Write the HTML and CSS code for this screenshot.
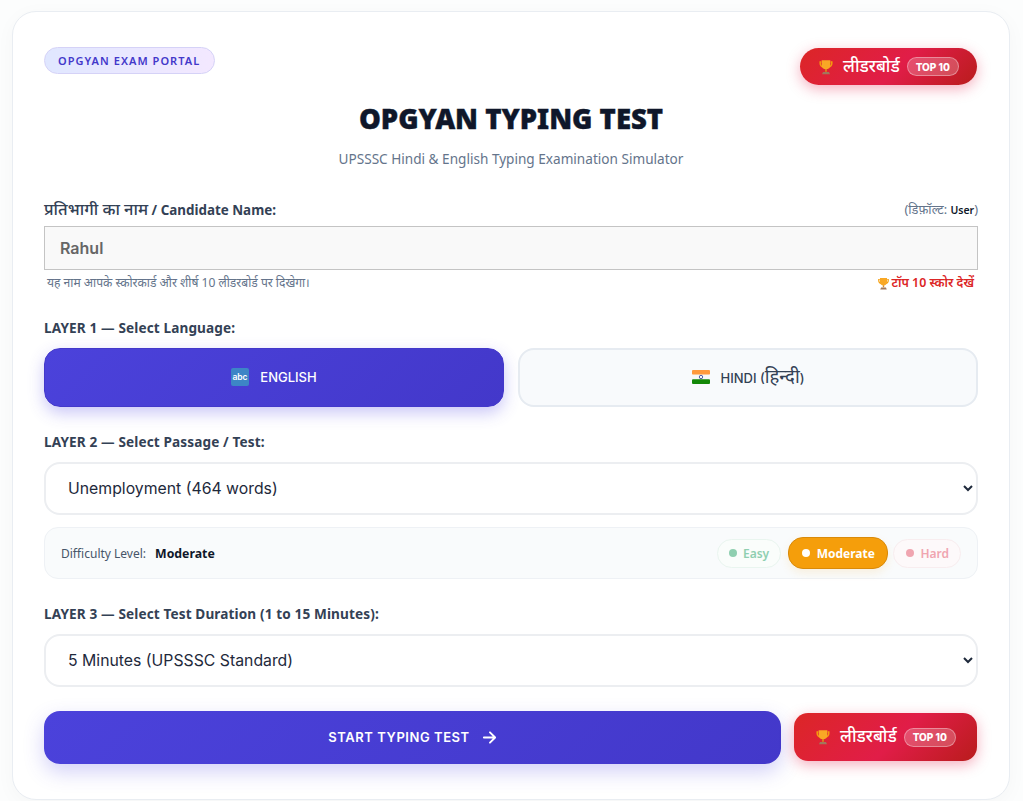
FILE: index.html
```html
<!DOCTYPE html>
<html lang="hi">
<head>
<meta charset="utf-8">
<title>OPGYAN Typing Test</title>
<link rel="stylesheet" href="styles.css">
</head>
<body>
<svg class="defs" width="0" height="0" aria-hidden="true">
  <symbol id="trophy" viewBox="0 0 24 24">
    <path d="M5 3.500H2.200v3.200c0 3.600 2.300 5.700 5.400 6l.5-1.900c-2.200-.2-3.700-1.600-3.700-4V5.500H5z M19 3.500h2.800v3.200c0 3.600-2.300 5.700-5.400 6l-.5-1.900c2.200-.2 3.700-1.600 3.700-4V5.500H19z" fill="#f59e0b"/>
    <path d="M5.500 2h13v7.500c0 3.600-2.600 6-6.500 6s-6.500-2.400-6.500-6z" fill="#f9a825"/>
    <path d="M10.700 15h2.600v4h-2.600z" fill="#e08a1a"/>
    <path d="M7.500 19.500h9L18 23H6z" fill="#a1785c"/>
  </symbol>
</svg>
<main class="card">
  <header class="top">
    <span class="badge">OPGYAN EXAM PORTAL</span>
    <button class="lead lead-pill" type="button">
      <svg class="trophy"><use href="#trophy"/></svg>
      <span class="lead-text">लीडरबोर्ड</span>
      <span class="top10">TOP 10</span>
    </button>
  </header>
  <h1 class="title">OPGYAN TYPING TEST</h1>
  <p class="sub">UPSSSC Hindi &amp; English Typing Examination Simulator</p>

  <div class="name-head">
    <label class="label name-label" for="name"><span class="hi">प्रतिभागी का नाम</span> / Candidate Name:</label>
    <span class="default">(डिफ़ॉल्ट: <b>User</b>)</span>
  </div>
  <input class="name" id="name" value="Rahul">
  <div class="hint-row">
    <span class="hint">यह नाम आपके स्कोरकार्ड और शीर्ष 10 लीडरबोर्ड पर दिखेगा।</span>
    <span class="hint-link"><svg class="trophy-s"><use href="#trophy"/></svg> टॉप 10 स्कोर देखें</span>
  </div>

  <div class="label layer-1">LAYER 1 — Select Language:</div>
  <div class="langs">
    <button class="lang active" type="button">
      <svg class="lang-icon" viewBox="0 0 18 18"><rect width="18" height="18" rx="2" fill="#3d85c6"/><text x="9" y="12" text-anchor="middle" class="abc">abc</text></svg>
      ENGLISH
    </button>
    <button class="lang" type="button">
      <svg class="lang-icon" viewBox="0 0 18 14"><rect width="18" height="4.700" rx="1" fill="#ff9a3c"/><rect y="4.700" width="18" height="4.600" fill="#f8f8f8"/><rect y="9.300" width="18" height="4.700" rx="1" fill="#138808"/><circle cx="9" cy="7" r="1.700" fill="none" stroke="#2a3a8c" stroke-width=".8"/></svg>
      <span class="lang-label">HINDI (<span class="lang-hi">हिन्दी</span>)</span>
    </button>
  </div>

  <label class="label layer-2" for="passage">LAYER 2 — Select Passage / Test:</label>
  <select class="select" id="passage"><option>Unemployment (464 words)</option></select>

  <div class="difficulty">
    <div class="diff-left">Difficulty Level:<b>Moderate</b></div>
    <div class="pills">
      <span class="pill easy"><i></i>Easy</span>
      <span class="pill mod"><i></i>Moderate</span>
      <span class="pill hard"><i></i>Hard</span>
    </div>
  </div>

  <label class="label layer-3" for="dur">LAYER 3 — Select Test Duration (1 to 15 Minutes):</label>
  <select class="select" id="dur"><option>5 Minutes (UPSSSC Standard)</option></select>

  <div class="actions">
    <button class="start" type="button">START TYPING TEST
      <svg class="arrow" viewBox="0 0 16 16"><path d="M2 8h11.500M8.500 2.500 14 8l-5.500 5.500" fill="none" stroke="#fff" stroke-width="2" stroke-linecap="round" stroke-linejoin="round"/></svg>
    </button>
    <button class="lead lead-box" type="button">
      <svg class="trophy"><use href="#trophy"/></svg>
      <span class="lead-text">लीडरबोर्ड</span>
      <span class="top10">TOP 10</span>
    </button>
  </div>
</main>
</body>
</html>
```
FILE: styles.css
```css
* { box-sizing: border-box; }
html, body { margin: 0; height: 801px; overflow: hidden; }
body {
  background: #fcfdfd;
  padding: 11px 13px 0 12px;
  font-family: "Noto Sans", sans-serif;
  color: #1e293b;
}
.defs { position: absolute; }
button { font-family: inherit; cursor: pointer; }
.card {
  height: 789px;
  background: #fff;
  border: 1px solid #e9edf2;
  border-radius: 24px;
  padding: 35px 31px 0 31px;
  box-shadow: 0 4px 20px rgba(15, 23, 42, .03);
}
.top { display: flex; justify-content: space-between; align-items: flex-start; height: 48px; }
.badge {
  height: 27px;
  padding: 0 14px 0 13px;
  display: flex;
  align-items: center;
  border-radius: 14px;
  border: 1px solid #d5d2f7;
  background: linear-gradient(90deg, #e0e7ff, #f3e8ff);
  color: #4338ca;
  font-size: 11px;
  font-weight: 600;
  letter-spacing: 1.050px;
}
.lead {
  display: flex;
  align-items: center;
  justify-content: center;
  border: 0;
  padding: 0;
  color: #fff;
  background: linear-gradient(135deg, #dc2626, #e11d48 55%, #b91c1c);
  font-family: "Noto Sans", sans-serif;
  font-weight: 500;
}
.lead-pill {
  margin: 1px 1px 0 0;
  width: 177px;
  height: 37px;
  border-radius: 19px;
  box-shadow: 0 4px 14px rgba(225, 29, 72, .35);
}
.lead-box {
  width: 183px;
  height: 48px;
  margin: 2px 1px 0 0;
  border-radius: 14px;
  box-shadow: 0 4px 14px rgba(225, 29, 72, .35);
}
.trophy { width: 16px; height: 16px; margin-right: 9px; }
.lead-text { font-size: 17px; line-height: 20px; margin-right: 7px; margin-top: -2px; }
.top10 {
  font-family: "Inter", sans-serif;
  font-size: 10px;
  font-weight: 800;
  height: 19px;
  padding: 0 8px;
  display: flex;
  align-items: center;
  border-radius: 10px;
  background: rgba(255, 255, 255, .22);
  border: 1px solid rgba(255, 255, 255, .35);
}
.title {
  margin: 5px 0 0;
  text-align: center;
  font-size: 27.500px;
  line-height: 38px;
  font-weight: 900;
  color: #0f172a;
  -webkit-text-stroke: .4px #0f172a;
}
.sub {
  margin: 12px 0 0;
  text-align: center;
  font-size: 13.600px;
  line-height: 18px;
  color: #64748b;
}
.label { display: block; font-size: 13.600px; font-weight: 700; line-height: 18px; color: #334155; letter-spacing: .12px; }
.name-label { font-size: 13.400px; letter-spacing: 0; }
.hi { font-size: 16.500px; font-weight: 500; }
.name-head { display: flex; justify-content: space-between; align-items: center; margin-top: 32px; height: 18px; }
.default { font-size: 12.800px; color: #64748b; }
.default b { color: #0f172a; font-size: 10.500px; font-weight: 600; }
.name {
  display: block;
  width: 100%;
  height: 44px;
  margin-top: 8px;
  padding: 0 15px;
  border: 1px solid #c4c4c4;
  background: #f9f9f9;
  font-family: "Inter", sans-serif;
  font-size: 16px;
  font-weight: 600;
  color: #666;
  outline: 0;
}
.hint-row { display: flex; justify-content: space-between; padding: 0 4px 0 3px; margin-top: 5px; line-height: 16px; }
.hint { font-size: 12.100px; color: #64748b; }
.hint-link { font-size: 12.400px; font-weight: 600; color: #dc2626; display: flex; align-items: center; gap: 2px; }
.trophy-s { width: 13px; height: 13px; }
.layer-1 { margin-top: 28px; }
.langs { display: grid; grid-template-columns: 1fr 1fr; gap: 14px; margin-top: 11px; }
.lang {
  height: 59px;
  display: flex;
  align-items: center;
  justify-content: center;
  gap: 11px;
  padding: 0 0 2px;
  border-radius: 16px;
  border: 2px solid #e6ebf1;
  background: #f8fafc;
  color: #334155;
  font-family: "Inter", sans-serif;
  font-size: 13px;
  font-weight: 500;
}
.lang.active {
  border-color: #4338ca;
  border-width: 1px;
  background: linear-gradient(135deg, #4b42db, #4338ca);
  color: #fff;
  box-shadow: 0 6px 16px rgba(79, 70, 229, .3);
}
.lang-label { margin-bottom: 3px; }
.lang-hi { font-family: "Noto Sans", sans-serif; font-size: 18.500px; font-weight: 400; }
.lang-icon { width: 18px; height: 18px; }
.abc { font-family: "Inter", sans-serif; font-size: 8.500px; font-weight: 600; fill: #fff; }
.layer-2 { margin-top: 26px; }
.select {
  display: block;
  width: 100%;
  height: 53px;
  margin-top: 11px;
  padding: 0 18px;
  border: 2px solid #eceef1;
  border-radius: 16px;
  background: #fff;
  font-family: "Inter", sans-serif;
  font-size: 15.800px;
  font-weight: 400;
  color: #1e293b;
}
.difficulty {
  height: 52px;
  margin-top: 12px;
  padding: 0 16px;
  display: flex;
  align-items: center;
  justify-content: space-between;
  border: 1px solid #eef1f5;
  border-radius: 14px;
  background: #f9fbfc;
}
.diff-left { font-size: 12px; color: #475569; }
.diff-left b { margin-left: 9px; color: #0f172a; font-size: 12.300px; font-weight: 700; }
.pills { display: flex; align-items: center; gap: 5px; }
.pill {
  display: flex;
  align-items: center;
  gap: 6px;
  height: 29px;
  padding: 0 11px;
  border-radius: 15px;
  font-size: 12px;
  font-weight: 600;
  border: 1px solid #eef1f5;
}
.pill i { width: 8px; height: 8px; border-radius: 50%; background: currentColor; }
.pill.easy { margin-right: 2px; color: #8fcfb0; background: #fafdfb; border-color: #e9f5ef; }
.pill.hard { padding-left: 12px; color: #f0a5b0; background: #fdf9fa; border-color: #f8edef; }
.pill.mod {
  height: 32px;
  padding: 0 12.500px;
  gap: 7px;
  color: #fff;
  font-weight: 700;
  background: #f59e0b;
  border-color: #d98a0a;
  box-shadow: 0 4px 10px rgba(245, 158, 11, .12);
}
.layer-3 { margin-top: 26px; }
.actions { display: flex; justify-content: space-between; align-items: flex-start; margin-top: 24px; }
.start {
  width: 737px;
  height: 53px;
  display: flex;
  align-items: center;
  justify-content: center;
  gap: 12px;
  padding: 0 0 1px;
  border: 0;
  border-radius: 16px;
  color: #fff;
  background: linear-gradient(135deg, #4b42db, #4338ca);
  box-shadow: 0 8px 20px rgba(79, 70, 229, .25);
  font-family: "Inter", sans-serif;
  font-size: 13px;
  font-weight: 600;
  letter-spacing: .55px;
}
.arrow { width: 15px; height: 15px; }
```
